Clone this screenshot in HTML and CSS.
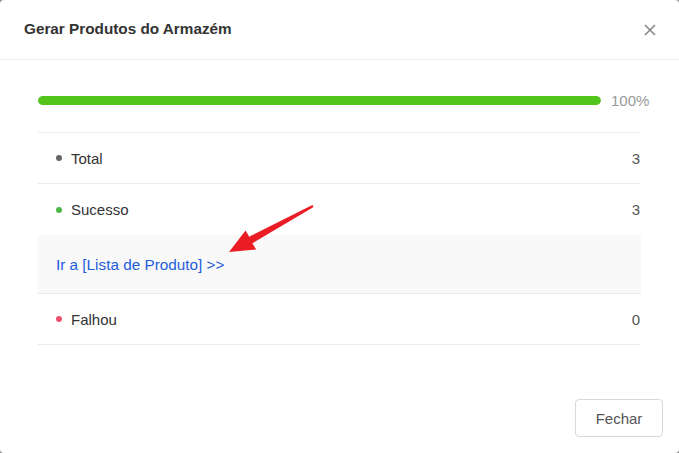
FILE: index.html
```html
<!DOCTYPE html>
<html lang="pt">
<head>
    <meta charset="UTF-8">
    <meta name="viewport" content="width=device-width, initial-scale=1.0">
    <title>Gerar Produtos do Armazém</title>
    <link rel="stylesheet" href="styles.css">
</head>
<body>
    <div class="modal">
        <div class="modal-header">
            <div class="modal-title">Gerar Produtos do Armazém</div>
            <button class="close-btn" aria-label="Fechar">
                <svg width="12" height="12" viewBox="0 0 12 12">
                    <path d="M1 1 L11 11 M11 1 L1 11" stroke="#888" stroke-width="1.6" fill="none"/>
                </svg>
            </button>
        </div>
        <div class="modal-body">
            <div class="progress">
                <div class="progress-track"><div class="progress-fill" style="width: 100%"></div></div>
                <span class="progress-text">100%</span>
            </div>
            <ul class="result-list">
                <li class="result-row">
                    <span class="dot dot-total"></span>
                    <span class="result-label">Total</span>
                    <span class="result-count">3</span>
                </li>
                <li class="result-row">
                    <span class="dot dot-success"></span>
                    <span class="result-label">Sucesso</span>
                    <span class="result-count">3</span>
                </li>
                <li class="result-link-row">
                    <a href="#" class="result-link">Ir a [Lista de Produto] &gt;&gt;</a>
                </li>
                <li class="result-row">
                    <span class="dot dot-failed"></span>
                    <span class="result-label">Falhou</span>
                    <span class="result-count">0</span>
                </li>
            </ul>
        </div>
        <div class="modal-footer">
            <button class="btn">Fechar</button>
        </div>
    </div>
    <!-- annotation arrow drawn over the dialog -->
    <svg class="annotation" width="679" height="453" viewBox="0 0 679 453">
        <polygon points="229,252 256.2,249.6 252.4,243.3 313.6,207 312.4,205 249.2,236.7 245.6,230.4" fill="#ec1c24"/>
    </svg>
</body>
</html>
```

FILE: styles.css
```css
* {
    box-sizing: border-box;
}
body {
    margin: 0;
    width: 679px;
    height: 453px;
    overflow: hidden;
    background: #8a8a8a;
    font-family: "Liberation Sans", Arial, sans-serif;
    color: #333;
}
.modal {
    display: flex;
    flex-direction: column;
    height: 100%;
    background: #fff;
    border-radius: 4px;
}
.modal-header {
    display: flex;
    align-items: center;
    justify-content: space-between;
    height: 60px;
    padding: 0 23px 0 24px;
    border-bottom: 1px solid #ebebeb;
}
.modal-title {
    font-size: 15.3px;
    font-weight: bold;
    color: #333;
    padding-bottom: 1px;
}
.close-btn {
    display: flex;
    padding: 0;
    border: none;
    background: none;
    cursor: pointer;
    margin-top: 1px;
}
.modal-body {
    padding: 30px 38px 0;
}
.progress {
    display: flex;
    align-items: center;
    height: 20px;
    margin-bottom: 22px;
}
.progress-track {
    flex: none;
    width: 563px;
    height: 9px;
    background: #f0f0f0;
    border-radius: 5px;
    overflow: hidden;
}
.progress-fill {
    height: 100%;
    background: #52c41a;
    border-radius: 5px;
}
.progress-text {
    flex: none;
    margin-left: 10px;
    font-size: 15px;
    color: #999;
}
.result-list {
    list-style: none;
    margin: 0;
    padding: 0;
    border-top: 1px solid #ebebeb;
}
.result-row {
    display: flex;
    align-items: center;
    height: 51px;
    padding: 0 1px 0 18px;
    border-bottom: 1px solid #ebebeb;
    font-size: 15px;
}
.result-row:nth-child(2) {
    border-bottom: none;
}
.dot {
    width: 6px;
    height: 6px;
    border-radius: 50%;
    margin-right: 9px;
}
.dot-total {
    background: #666;
}
.dot-success {
    background: #4cb848;
}
.dot-failed {
    background: #f0506e;
}
.result-label {
    flex: 1;
    color: #333;
}
.result-count {
    color: #555;
}
.result-link-row {
    display: flex;
    align-items: center;
    height: 59px;
    padding: 2px 0 0 18px;
    background: #f9f9f9;
    border-bottom: 1px solid #ebebeb;
}
.result-link {
    font-size: 15.3px;
    color: #1d5ddb;
    text-decoration: none;
}
.modal-footer {
    margin-top: auto;
    display: flex;
    justify-content: flex-end;
    padding: 0 16px 16px;
}
.btn {
    width: 88px;
    height: 38px;
    background: #fff;
    border: 1px solid #d9d9d9;
    border-radius: 4px;
    font-family: inherit;
    font-size: 15px;
    color: #555;
    cursor: pointer;
}
.annotation {
    position: absolute;
    top: 0;
    left: 0;
    pointer-events: none;
}
```
